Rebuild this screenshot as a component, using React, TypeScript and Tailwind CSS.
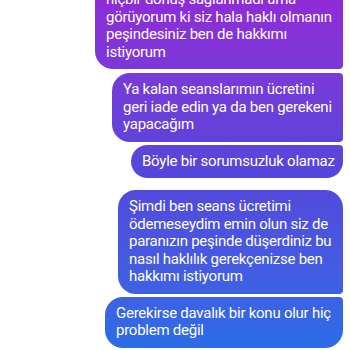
import React from 'react';

interface Bubble {
    lines: string[];
    width: string; // fixed bubble width so lines sit like the screenshot
    corners: string; // rounding per corner, depends on position in group
    gap: string;
}

const bubbles: Bubble[] = [
    {
        lines: ['hiçbir dönüş sağlanmadı ama', 'görüyorum ki siz hala haklı olmanın', 'peşindesiniz ben de hakkımı', 'istiyorum'],
        width: 'w-[248px]',
        corners: 'rounded-tl-[18px] rounded-tr-[4px] rounded-br-[4px] rounded-bl-[18px]',
        gap: '',
    },
    {
        lines: ['Ya kalan seanslarımın ücretini', 'geri iade edin ya da ben gerekeni', 'yapacağım'],
        width: 'w-[231px]',
        corners: 'rounded-tl-[18px] rounded-tr-[4px] rounded-br-[4px] rounded-bl-[18px]',
        gap: 'mt-[4px]',
    },
    {
        lines: ['Böyle bir sorumsuzluk olamaz'],
        width: 'w-[212px]',
        corners: 'rounded-tl-[18px] rounded-tr-[4px] rounded-br-[18px] rounded-bl-[18px]',
        gap: 'mt-[3px]',
    },
    {
        lines: ['Şimdi ben seans ücretimi', 'ödemeseydim emin olun siz de', 'paranızın peşinde düşerdiniz bu', 'nasıl haklılık gerekçenizse ben', 'hakkımı istiyorum'],
        width: 'w-[225px]',
        corners: 'rounded-tl-[18px] rounded-tr-[18px] rounded-br-[4px] rounded-bl-[18px]',
        gap: 'mt-[12px]',
    },
    {
        lines: ['Gerekirse davalık bir konu olur hiç', 'problem değil'],
        width: 'w-[238px]',
        corners: 'rounded-tl-[18px] rounded-tr-[4px] rounded-br-[18px] rounded-bl-[18px]',
        gap: 'mt-[3px]',
    },
];

const App: React.FC = () => {
    return (
        <div className="w-[350px] h-[350px] overflow-hidden bg-white" style={{ fontFamily: 'Roboto, "Noto Sans", sans-serif' }}>
            <div className="flex flex-col items-end pr-[7px] -mt-[17px]">
                {bubbles.map((b, i) => (
                    <div
                        key={i}
                        className={`${b.width} ${b.corners} ${b.gap} pl-[11px] pr-[8px] py-[8px] text-white text-[15px] leading-[17.5px] tracking-[-0.25px] bg-fixed bg-linear-to-b from-[#8f2bd7] via-[#5446db] to-[#2a6de7]`}
                    >
                        {b.lines.map((line, j) => (
                            <div key={j} className="whitespace-nowrap">{line}</div>
                        ))}
                    </div>
                ))}
            </div>
        </div>
    );
};

export default App;
